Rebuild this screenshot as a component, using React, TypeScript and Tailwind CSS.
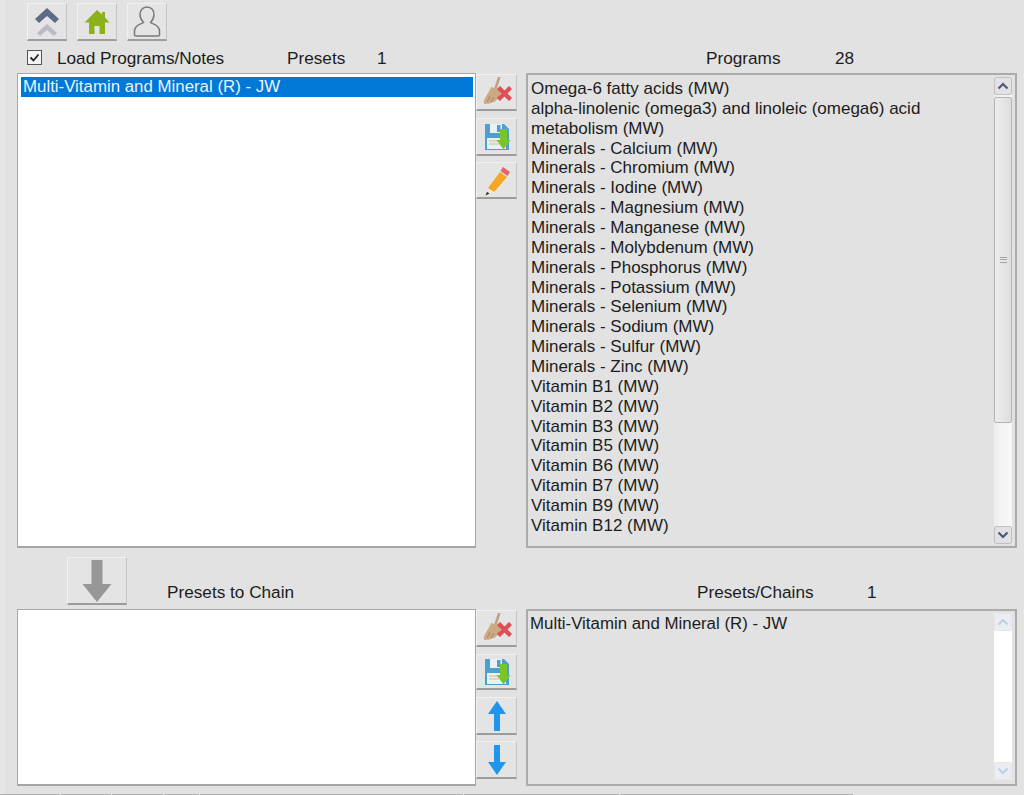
import React from "react";

const programs = [
  "Omega-6 fatty acids (MW)",
  "alpha-linolenic (omega3) and linoleic (omega6) acid",
  "metabolism (MW)",
  "Minerals - Calcium (MW)",
  "Minerals - Chromium (MW)",
  "Minerals - Iodine (MW)",
  "Minerals - Magnesium (MW)",
  "Minerals - Manganese (MW)",
  "Minerals - Molybdenum (MW)",
  "Minerals - Phosphorus (MW)",
  "Minerals - Potassium (MW)",
  "Minerals - Selenium (MW)",
  "Minerals - Sodium (MW)",
  "Minerals - Sulfur (MW)",
  "Minerals - Zinc (MW)",
  "Vitamin B1 (MW)",
  "Vitamin B2 (MW)",
  "Vitamin B3 (MW)",
  "Vitamin B5 (MW)",
  "Vitamin B6 (MW)",
  "Vitamin B7 (MW)",
  "Vitamin B9 (MW)",
  "Vitamin B12 (MW)",
];

function Btn({ className, children }: { className: string; children: React.ReactNode }) {
  return (
    <div
      className={`flex items-center justify-center bg-[#e4e4e4] border-t border-l border-t-[#f1f1f1] border-l-[#f1f1f1] border-r border-r-[#c4c4c4] border-b-2 border-b-[#9c9c9c] ${className}`}
    >
      {children}
    </div>
  );
}

const Broom = () => (
  <svg width="30" height="30" viewBox="0 0 30 30">
    <path d="M17 1 L13 13" stroke="#bda285" strokeWidth="2.6" strokeLinecap="round" />
    <path d="M9 10 L19 13 C19 20 14 27 2 27 C1 21 7 17 9 10 Z" fill="#cbaa84" />
    <path d="M8 19 L5 25 M12 20 L9 25" stroke="#a8845c" strokeWidth="1" />
    <path d="M18 12 L27 21 M27 12 L18 21" stroke="#dd5057" strokeWidth="4.4" strokeLinecap="square" />
  </svg>
);

const Floppy = () => (
  <svg width="28" height="28" viewBox="0 0 28 28">
    <path d="M2 1 H21 L26 6 V27 H2 Z" fill="#4d9fd0" />
    <rect x="7" y="1" width="12" height="9" fill="#e9f1f5" />
    <rect x="14" y="2" width="3.5" height="7" fill="#4d9fd0" />
    <rect x="4" y="15" width="19" height="11" fill="#eef0ee" />
    <path d="M6 18 H16 M6 21 H16" stroke="#c9b99a" strokeWidth="1" />
    <path d="M17 6 H24 V17 H27.5 L20.5 26.5 L13.5 17 H17 Z" fill="#7bc626" />
  </svg>
);

const Pencil = () => (
  <svg width="28" height="32" viewBox="0 0 28 32">
    <path d="M20 3 L27 8 L24.5 12 L17.5 7 Z" fill="#e5646a" />
    <path d="M17 8 L24 13 L11 28 L5 24 Z" fill="#f5a623" />
    <path d="M5 24 L11 28 L3 31 Z" fill="#f4e7cf" />
    <path d="M4 28 L6.5 29.5 L2.5 31.5 Z" fill="#222" />
  </svg>
);

const ArrowUp = () => (
  <svg width="20" height="32" viewBox="0 0 20 32">
    <path d="M10 1 L19 14 H13 V31 H7 V14 H1 Z" fill="#1f95ec" />
  </svg>
);

const ArrowDown = () => (
  <svg width="20" height="32" viewBox="0 0 20 32">
    <path d="M7 1 H13 V18 H19 L10 31 L1 18 H7 Z" fill="#1f95ec" />
  </svg>
);

function Scrollbar({ disabled }: { disabled?: boolean }) {
  const chev = disabled ? "#bdd0e6" : "#4b5a78";
  const btn = disabled
    ? "h-[18px] flex items-center justify-center border border-[#e6e6e6] rounded-[2px] bg-[#eaeef3]"
    : "h-[18px] flex items-center justify-center border border-[#c0c0c0] rounded-[2px] bg-[#e2e2e6]";
  return (
    <div
      className={`absolute right-[3px] top-[2px] w-[18px] flex flex-col ${
        disabled ? "bottom-[4px] bg-white" : "bottom-[2px] bg-gradient-to-r from-[#eeeeee] to-[#f8f8f8]"
      }`}
    >
      <div className={btn}>
        <svg width="12" height="8" viewBox="0 0 12 8"><path d="M1.5 6.5 L6 2 L10.5 6.5" fill="none" stroke={chev} strokeWidth="2.2" /></svg>
      </div>
      {disabled ? (
        <div className="flex-1" />
      ) : (
        <>
          <div className="mt-[2px] h-[326px] flex items-center justify-center border border-[#b4b4b4] rounded-[2px] bg-gradient-to-r from-[#ededed] to-[#dedede]">
            <div className="w-[7px] h-[6px] border-y border-[#a8a8a8] relative after:absolute after:left-0 after:right-0 after:top-[1px] after:h-[1px] after:bg-[#a8a8a8]" />
          </div>
          <div className="flex-1" />
        </>
      )}
      <div className={btn}>
        <svg width="12" height="8" viewBox="0 0 12 8"><path d="M1.5 1.5 L6 6 L10.5 1.5" fill="none" stroke={chev} strokeWidth="2.2" /></svg>
      </div>
    </div>
  );
}

export default function App() {
  return (
    <div className="w-[1024px] h-[795px] bg-[#e2e2e2] text-[#1c1c1c] text-[17px] leading-[20px] overflow-hidden flex flex-col font-['Liberation_Sans',Arial,sans-serif]">
      <div className="flex flex-1 min-h-0">
        <div className="w-[7px] bg-[#e6e6e6] border-r border-r-[#dcdcdc]" />
        <div className="flex-1 min-w-0 flex flex-col">
          {/* Toolbar */}
          <div className="flex gap-[10px] pl-[20px] pt-[3px]">
            <Btn className="w-[40px] h-[38px]">
              <svg width="28" height="28" viewBox="0 0 28 28">
                <path d="M14 16 L24 25 L21 28 L14 22 L7 28 L4 25 Z" fill="#b9bcc6" />
                <path d="M14 0 L26 11 L22 15 L14 8 L6 15 L2 11 Z" fill="#5e6b85" />
              </svg>
            </Btn>
            <Btn className="w-[40px] h-[38px]">
              <svg width="26" height="26" viewBox="0 0 26 26">
                <path d="M13 1 L18 5.5 V3 H21 V8.5 L25.5 13.5 H21 V25 H15.5 V17 H10.5 V25 H5 V13.5 H0.5 Z" fill="#8db11d" />
              </svg>
            </Btn>
            <Btn className="w-[40px] h-[38px]">
              <svg width="28" height="32" viewBox="0 0 28 32">
                <path
                  d="M14 1 C18.5 1 21 4.5 21 8.5 C21 12 19.5 14.5 17.5 16.5 C19 18 26.5 18.5 26.5 25 V29 Q26.5 30 25 30 H3 Q1.5 30 1.5 29 V25 C1.5 18.5 9 18 10.5 16.5 C8.5 14.5 7 12 7 8.5 C7 4.5 9.5 1 14 1 Z"
                  fill="none"
                  stroke="#7a7a7a"
                  strokeWidth="1.5"
                />
              </svg>
            </Btn>
          </div>

          {/* Upper labels */}
          <div className="flex items-center h-[22px] mt-[6px] pl-[20px] text-[17.2px]">
            <div className="w-[15px] h-[15px] mb-[1px] border border-[#555] bg-[#f4f4f4] flex items-center justify-center">
              <svg width="11" height="11" viewBox="0 0 11 11"><path d="M1.5 5.5 L4.5 8.5 L9.5 2.5" fill="none" stroke="#222" strokeWidth="1.8" /></svg>
            </div>
            <span className="ml-[15px] w-[230px]">Load Programs/Notes</span>
            <span className="w-[90px]">Presets</span>
            <span className="w-[329px]">1</span>
            <span className="w-[129px]">Programs</span>
            <span>28</span>
          </div>

          {/* Upper panels */}
          <div className="flex pl-[10px] mt-[4px]">
            <div className="w-[459px] h-[475px] bg-white border border-[#a6a6a6] border-b-2 pl-[3px] pr-[2px] pt-[3px] text-[16.85px]">
              <div className="h-[20px] pl-[2px] bg-[#0078d7] text-[#eaf4fc] leading-[20px] whitespace-nowrap">Multi-Vitamin and Mineral (R) - JW</div>
            </div>
            <div className="w-[41px] pt-[1px] flex flex-col">
              <Btn className="h-[37px]"><Broom /></Btn>
              <Btn className="h-[38px] mt-[7px]"><Floppy /></Btn>
              <Btn className="h-[37px] mt-[6px]"><Pencil /></Btn>
            </div>
            <div className="relative ml-[9px] w-[491px] h-[475px] border-2 border-[#ababab] pl-[3px] pt-[4px] leading-[19.86px]">
              {programs.map((p) => (
                <div key={p} className="h-[19.86px] whitespace-nowrap">{p}</div>
              ))}
              <Scrollbar />
            </div>
          </div>

          {/* Lower labels */}
          <div className="flex items-end h-[57px] pl-[60px]">
            <Btn className="w-[60px] h-[48px] mr-[40px]">
              <svg width="30" height="44" viewBox="0 0 30 44">
                <path d="M9.5 1 H20.5 V25 H29.5 L15 43 L0.5 25 H9.5 Z" fill="#979797" />
              </svg>
            </Btn>
            <div className="flex items-center h-[22px] mb-[2px] text-[17.2px]">
              <span className="w-[530px]">Presets to Chain</span>
              <span className="w-[170px]">Presets/Chains</span>
              <span>1</span>
            </div>
          </div>

          {/* Lower panels */}
          <div className="flex pl-[10px] mt-[4px]">
            <div className="w-[459px] h-[177px] bg-white border border-[#a6a6a6] border-b-2" />
            <div className="w-[41px] pt-[1px] flex flex-col">
              <Btn className="h-[37px]"><Broom /></Btn>
              <Btn className="h-[36px] mt-[7px]"><Floppy /></Btn>
              <Btn className="h-[38px] mt-[7px]"><ArrowUp /></Btn>
              <Btn className="h-[38px] mt-[6px]"><ArrowDown /></Btn>
            </div>
            <div className="relative ml-[9px] w-[491px] h-[177px] border-2 border-[#ababab] pl-[2px] pt-[3px] leading-[19.86px] text-[16.85px]">
              <div className="whitespace-nowrap">Multi-Vitamin and Mineral (R) - JW</div>
              <Scrollbar disabled />
            </div>
          </div>
        </div>
      </div>

      {/* Bottom edge */}
      <div className="flex h-[1px] gap-[1px]">
        <div className="w-[60px] bg-[#b0b0b0]" />
        <div className="w-[50px] bg-[#b0b0b0]" />
        <div className="w-[51px] bg-[#b0b0b0]" />
        <div className="w-[35px] bg-[#b0b0b0]" />
        <div className="w-[263px] bg-[#b0b0b0]" />
        <div className="w-[155px] bg-[#b0b0b0]" />
        <div className="w-[233px] bg-[#b0b0b0]" />
      </div>
    </div>
  );
}
